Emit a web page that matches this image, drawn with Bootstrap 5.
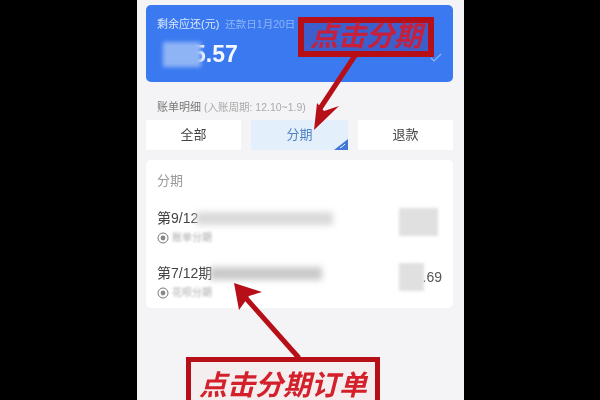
<!DOCTYPE html>
<html lang="zh"><head><meta charset="utf-8"><title>分期</title>
<link href="https://cdn.jsdelivr.net/npm/bootstrap@5.3.0/dist/css/bootstrap.min.css" rel="stylesheet">
<style>
html,body{height:400px;overflow:hidden;background:#000;font-family:"Liberation Sans","Noto Sans CJK SC",sans-serif}
.phone{width:327px;height:400px;margin-left:137px;background:#f4f4f6;padding:5px 11px 0 9px;position:relative;overflow:hidden;filter:blur(.6px)}
.bluebox{height:77px;background:#3a79f0;border-radius:5px;padding:13px 11px 0 11px;position:relative;color:#fff}
.due{font-size:11px;line-height:12px;color:#dce8fd}
.due span{color:#8fb5f7;margin-left:6px;font-size:10.5px}
.amount{display:flex;align-items:center;margin-top:11px;height:26px;padding-left:6px}
.smear{display:inline-block;background:#8fb4f6;filter:blur(2px);width:38px;height:25px}
.amt-num{font-size:23px;font-weight:700;line-height:26px;margin-left:-8px;color:#f4f8ff}
.tick{position:absolute;right:11px;bottom:20px}
.subhead{font-size:11px;line-height:12px;color:#777;padding:19px 0 0 11px;height:38px}
.subhead span{color:#aaa;margin-left:3px;font-size:10.5px}
.tabrow{display:flex;justify-content:space-between}
.tabcell{width:95px;height:30px;background:#fff;font-size:13px;line-height:30px;text-align:center;color:#444;position:relative;overflow:hidden}
.tabcell.on{background:#e4effc;color:#4e83c4;width:97px}
.corner{position:absolute;right:0;bottom:0}
.listbox{margin-top:10px;background:#fff;border-radius:5px;height:148px;padding:13px 10px 0 11px}
.listtitle{font-size:13px;line-height:16px;color:#999;margin-bottom:22px}
.rowline{display:flex;justify-content:space-between;height:55px}
.rowname{font-size:14px;line-height:15px;color:#444;display:flex;align-items:center}
.blurbar{display:inline-block;height:13px;background:#d9d9d9;filter:blur(3px);margin-left:-2px}
.blurbar.deep{background:#c9c9c9}
.rowsub{font-size:10px;line-height:12px;color:#aaa;display:flex;align-items:center;gap:3px;margin-top:6px}
.rowsub i{filter:blur(1px);font-style:normal}
.rowamt{width:44px;height:28px;position:relative;font-size:14px;color:#555;text-align:right;line-height:28px;margin-top:-3px;padding-right:1px}
.amtsmear{position:absolute;left:0;top:0;height:28px;background:#e0e0e0;filter:blur(1.5px)}
.callout{position:absolute;border:6px solid #b70f17;color:#d3202b;font-style:italic;font-weight:700;white-space:nowrap;text-align:center}
.c1{left:161px;top:17px;width:136px;height:40px;font-size:28px;line-height:28px;background:#3d5fcb;color:#c81f3b}
.c2{left:49px;top:357px;width:194px;height:60px;font-size:28px;line-height:48px;background:#f5eeee;border-width:5px}
.arrows{position:absolute;left:0;top:0}
</style></head><body>
<div class="phone">
  <div class="bluebox">
    <div class="due">剩余应还(元)<span>还款日1月20日</span></div>
    <div class="amount"><span class="smear"></span><span class="amt-num">5.57</span></div>
    <svg class="tick" width="12" height="9" viewBox="0 0 12 9"><path d="M1 5l3 3 7-7" fill="none" stroke="#8fb5f7" stroke-width="1.2"/></svg>
  </div>
  <div class="subhead">账单明细<span>(入账周期: 12.10~1.9)</span></div>
  <div class="tabrow">
    <div class="tabcell">全部</div>
    <div class="tabcell on">分期<svg class="corner" width="16" height="11" viewBox="0 0 16 11"><path d="M16 0v11H2z" fill="#3f78d8"/><path d="M8 9l3-2 2-2" stroke="#e4effc" fill="none"/></svg></div>
    <div class="tabcell">退款</div>
  </div>
  <div class="listbox">
    <div class="listtitle">分期</div>
    <div class="rowline">
      <div><div class="rowname">第9/12<span class="blurbar" style="width:137px"></span></div>
      <div class="rowsub"><svg width="12" height="12" viewBox="0 0 12 12"><circle cx="6" cy="6" r="5" fill="none" stroke="#777" stroke-width="1"/><circle cx="6" cy="6" r="2.4" fill="#888"/></svg><i>账单分期</i></div></div>
      <div class="rowamt"><span class="amtsmear" style="width:39px"></span></div>
    </div>
    <div class="rowline">
      <div><div class="rowname">第7/12期<span class="blurbar deep" style="width:112px"></span></div>
      <div class="rowsub"><svg width="12" height="12" viewBox="0 0 12 12"><circle cx="6" cy="6" r="5" fill="none" stroke="#777" stroke-width="1"/><circle cx="6" cy="6" r="2.4" fill="#888"/></svg><i>花呗分期</i></div></div>
      <div class="rowamt"><span class="amtsmear" style="width:25px"></span>.69</div>
    </div>
  </div>
  <svg class="arrows" width="327" height="400" viewBox="0 0 327 400">
    <path d="M219 54L182 110" stroke="#b70f17" stroke-width="5" fill="none"/>
    <path d="M177 130l3-27 7 8 15-5z" fill="#b70f17"/>
    <path d="M162 358L107 296" stroke="#b70f17" stroke-width="5" fill="none"/>
    <path d="M97 283l28 9-13 4-10 14z" fill="#b70f17"/>
  </svg>
  <div class="callout c1">点击分期</div>
  <div class="callout c2">点击分期订单</div>
</div>
</body></html>
